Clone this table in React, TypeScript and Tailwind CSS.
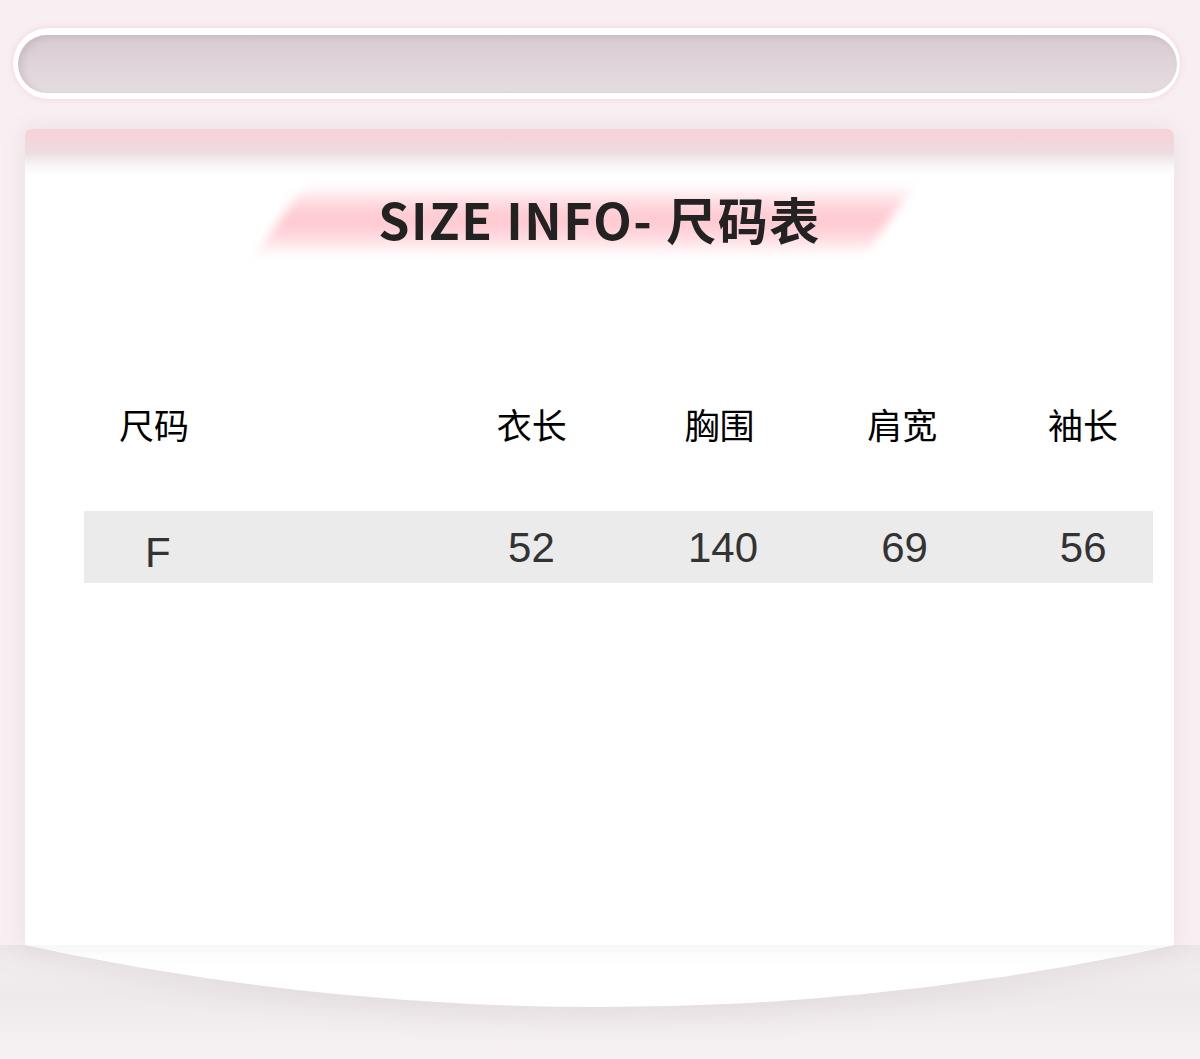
import React from "react";

const cjk = { fontFamily: '"Noto Sans CJK SC", "Noto Sans", sans-serif' };
const latin = { fontFamily: '"Liberation Sans", Arial, sans-serif' };

export default function App() {
  return (
    <div className="w-[1200px] h-[1059px] overflow-hidden bg-[#f8eff2] pt-[28px]">
      {/* top pill */}
      <div className="ml-[13px] w-[1167px] h-[71px] rounded-full bg-white pt-[7px] pb-[6px] pl-[5px] pr-[3px] shadow-[0_0_6px_rgba(240,200,215,0.7)]">
        <div className="w-full h-full rounded-full bg-[linear-gradient(to_bottom,#d8cbd2,#e6dde1)] shadow-[inset_4px_2px_6px_rgba(150,130,140,0.25)]" />
      </div>

      {/* card */}
      <div className="ml-[25px] mt-[30px] w-[1149px] relative">
        <div className="relative z-10 h-[816px] rounded-t-[7px] bg-[linear-gradient(to_bottom,#f6d2d8_0px,#f2d6db_12px,#ecdee1_24px,#f8f5f6_36px,#ffffff_46px)] shadow-[0_0_22px_rgba(150,125,135,0.13)] pt-[60px]">
          {/* title */}
          <div className="relative h-[62px] flex items-center justify-center">
            <div className="absolute left-[254px] top-[1px] w-[610px] h-[62px] -skew-x-[34deg] blur-[6px] bg-[linear-gradient(to_bottom,#fff2f4_0%,#ffd6dc_25%,#ffc6ce_50%,#ffdce1_78%,#fff5f6_100%)]" />
            <div
              className="relative text-[50px] leading-none font-bold text-[#222222] tracking-[1.5px] -mt-[4px]"
              style={cjk}
            >
              SIZE INFO- 尺码表
            </div>
          </div>

          {/* header row */}
          <div className="mt-[142px] ml-[59px] w-[1069px] h-[60px] flex items-center text-[35px] leading-none text-black" style={cjk}>
            <div className="w-[140px] text-center">尺码</div>
            <div className="w-[140px] ml-[238px] text-center">衣长</div>
            <div className="w-[140px] ml-[48px] text-center">胸围</div>
            <div className="w-[140px] ml-[43px] text-center">肩宽</div>
            <div className="w-[140px] ml-[41px] text-center">袖长</div>
          </div>

          {/* data row */}
          <div className="mt-[58px] ml-[59px] w-[1069px] h-[72px] bg-[#ebebeb] flex items-center text-[42px] leading-none text-[#333333]" style={latin}>
            <div className="w-[140px] ml-[4px] text-center pt-[11px]">F</div>
            <div className="w-[140px] ml-[234px] text-center pt-[2px]">52</div>
            <div className="w-[140px] ml-[52px] text-center pt-[2px]">140</div>
            <div className="w-[140px] ml-[42px] text-center pt-[2px]">69</div>
            <div className="w-[140px] ml-[39px] text-center pt-[2px]">56</div>
          </div>
        </div>

        {/* curved bottom */}
        <div className="relative -ml-[25px] w-[1200px] h-[114px] overflow-hidden bg-[linear-gradient(to_bottom,#f3eef0_0%,#eee9eb_45%,#f7f1f3_100%)]">
          <div className="absolute left-[-2097px] bottom-[52px] w-[5394px] h-[5394px] rounded-full bg-white shadow-[0_6px_30px_rgba(130,110,120,0.12)]" />
        </div>
      </div>
    </div>
  );
}
